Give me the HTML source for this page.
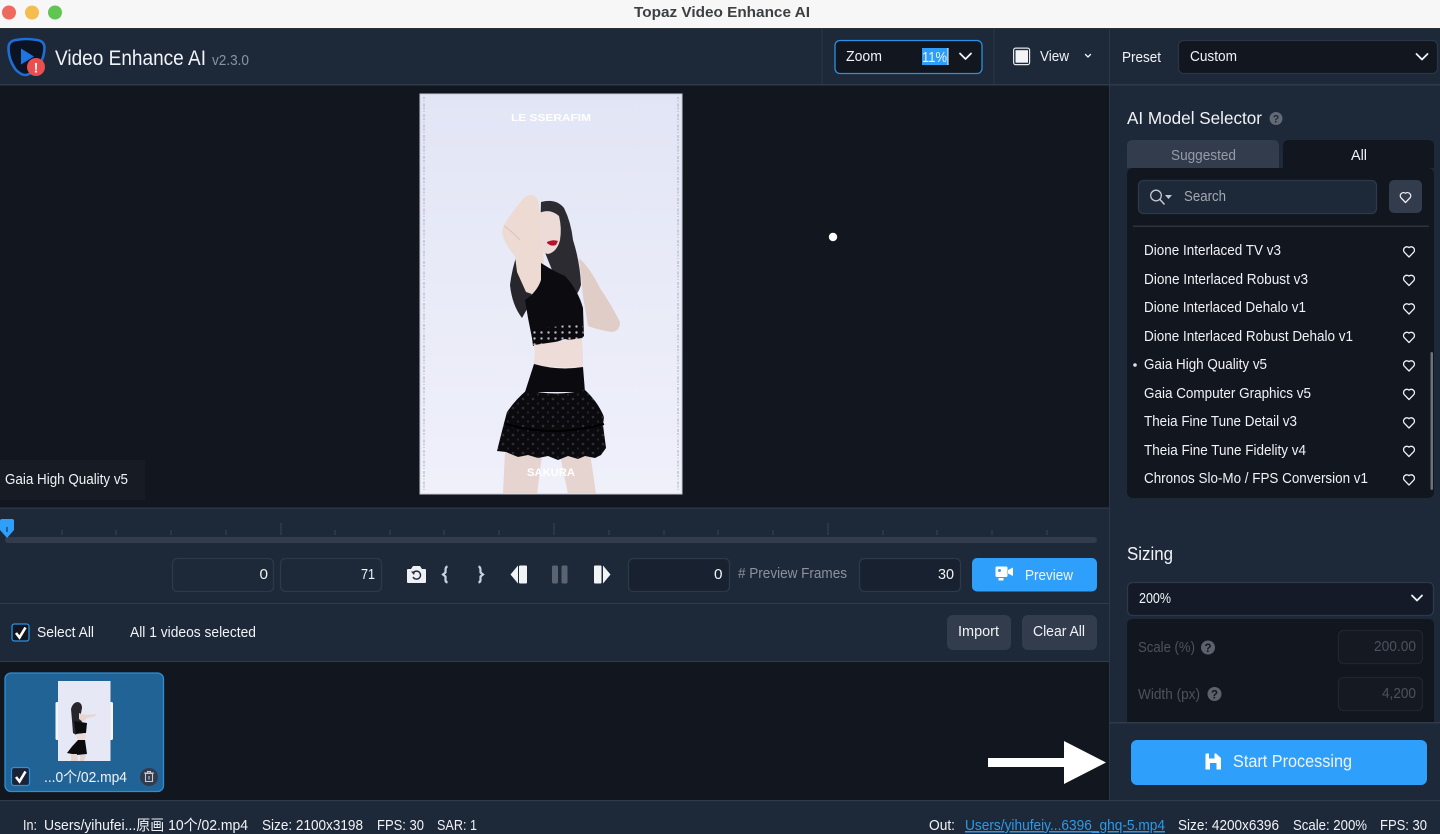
<!DOCTYPE html>
<html><head><meta charset="utf-8"><title>Topaz Video Enhance AI</title>
<style>
html,body{margin:0;padding:0;background:#12161f;width:1440px;height:834px;overflow:hidden}
svg{display:block}
text{font-family:"Liberation Sans","Noto Sans CJK SC",sans-serif;font-size:15px;fill:#f1f3f6}
.g{fill:#8d929b}.d{fill:#4c525d}
.tk{stroke:#3a4556;stroke-width:1}
.h{fill:none;stroke:#eef0f3;stroke-width:1.3;stroke-linejoin:round}
.ch{fill:none;stroke:#f1f3f6;stroke-width:1.8;stroke-linecap:round;stroke-linejoin:round}
</style></head><body>
<svg xmlns="http://www.w3.org/2000/svg" width="1440" height="834" viewBox="0 0 1440 834">
<defs>
<linearGradient id="bg" x1="0" y1="0" x2="0" y2="1"><stop offset="0" stop-color="#e2e5f5"/><stop offset=".5" stop-color="#e9ebf8"/><stop offset="1" stop-color="#eff0fa"/></linearGradient>
<pattern id="lace" width="10" height="9" patternUnits="userSpaceOnUse"><rect width="10" height="9" fill="#0b0b0f"/><circle cx="3" cy="3" r="1.300" fill="#2e2e36"/><circle cx="8" cy="7.500" r="1.100" fill="#26262e"/></pattern>
<pattern id="lace2" width="7" height="6" patternUnits="userSpaceOnUse"><rect width="7" height="6" fill="#0b0b0f"/><circle cx="2.500" cy="2.500" r="1.200" fill="#b9b6c2"/></pattern>
</defs>
<rect width="1440" height="834" fill="#12161f"/>
<!-- title bar -->
<rect width="1440" height="28" fill="#f6f7f6"/>
<rect y="28" width="1440" height="1" fill="#2b2f38"/>
<circle cx="9" cy="12.500" r="7" fill="#ee6a5f"/><circle cx="32" cy="12.500" r="7" fill="#f5bd4f"/><circle cx="55" cy="12.500" r="7" fill="#61c554"/>
<text x="634" y="17" textLength="176" lengthAdjust="spacingAndGlyphs" font-weight="bold" style="fill:#3d3f42;font-size:14.500px">Topaz Video Enhance AI</text>
<!-- toolbar -->
<rect y="29" width="1440" height="55" fill="#1d2839"/>
<rect y="84" width="1440" height="1.500" fill="#2f3a4b"/>
<path d="M822 29V84M994 29V84M1109.500 29V84" stroke="#2b3647" stroke-width="1"/>
<!-- logo -->
<path d="M8.500 48Q8.500 41 16 40Q26 38 37 40Q44.500 41 44.500 48Q44 62 34 70.500Q29 75 25.500 75Q21 75 16 70Q8.500 60 8.500 48Z" fill="#0c1323" stroke="#1b6fd6" stroke-width="2.600"/>
<path d="M21 48.500L34 56.500L21 64.500Z" fill="#1d74e2"/>
<circle cx="36" cy="67" r="9" fill="#ea4f50"/>
<text x="33.500" y="72.500" textLength="5" lengthAdjust="spacingAndGlyphs" font-weight="bold" style="font-size:14px">!</text>
<text x="55" y="65" textLength="151" lengthAdjust="spacingAndGlyphs" style="font-size:21px">Video Enhance AI</text>
<text x="212" y="65" textLength="37" lengthAdjust="spacingAndGlyphs" class="g">v2.3.0</text>
<!-- zoom -->
<rect x="835" y="40.500" width="147" height="33" rx="5" fill="#12161f" stroke="#2a90e2" stroke-width="1.300"/>
<text x="846" y="61" textLength="36" lengthAdjust="spacingAndGlyphs">Zoom</text>
<rect x="922" y="48" width="26" height="17" fill="#2d9ffb"/>
<rect x="947.500" y="48" width="1" height="17" fill="#fff"/>
<text x="922" y="62" textLength="25" lengthAdjust="spacingAndGlyphs" style="fill:#eaf4ff">11%</text>
<path class="ch" d="M960 53.500L965.500 59L971 53.500"/>
<!-- view -->
<rect x="1013.600" y="48.100" width="16" height="16.500" rx="2" fill="#1d2839" stroke="#e4e6ea" stroke-width="1.200"/>
<rect x="1015.500" y="50.200" width="12.500" height="12.500" fill="#f2f3f5"/>
<text x="1040" y="61" textLength="29" lengthAdjust="spacingAndGlyphs">View</text>
<path class="ch" style="stroke-width:1.300" d="M1085.500 54.500L1088 57L1090.500 54.500"/>
<!-- preset -->
<text x="1122" y="62" textLength="39" lengthAdjust="spacingAndGlyphs">Preset</text>
<rect x="1178.500" y="40.500" width="259" height="33" rx="5" fill="#12161f" stroke="#2a3546" stroke-width="1.300"/>
<text x="1190" y="61" textLength="47" lengthAdjust="spacingAndGlyphs">Custom</text>
<path class="ch" d="M1416.500 54L1422 59.500L1427.500 54"/>
<!-- right panel -->
<rect x="1110" y="85.500" width="330" height="716" fill="#1d2839"/>
<rect x="1109" y="85" width="1" height="716" fill="#2b3647"/>
<text x="1127" y="124" textLength="135" lengthAdjust="spacingAndGlyphs" style="font-size:17.500px">AI Model Selector</text>
<circle cx="1276" cy="118.500" r="6.500" fill="#646a75"/>
<text x="1272.700" y="122.500" textLength="6.500" lengthAdjust="spacingAndGlyphs" font-weight="bold" style="font-size:11px;fill:#1d2839">?</text>
<path d="M1127 168V146Q1127 140 1133 140H1273Q1279 140 1279 146V168Z" fill="#323c4d"/>
<path d="M1283 168V146Q1283 140 1289 140H1428Q1434 140 1434 146V168Z" fill="#12161f"/>
<text x="1171" y="160" textLength="65" lengthAdjust="spacingAndGlyphs" style="fill:#969ca6">Suggested</text>
<text x="1351" y="160" textLength="16" lengthAdjust="spacingAndGlyphs">All</text>
<rect x="1127" y="168" width="307" height="330" rx="6" fill="#12161f"/>
<rect x="1138.500" y="180.500" width="238" height="33" rx="5" fill="#1d2839" stroke="#2d3849" stroke-width="1.300"/>
<circle cx="1156" cy="195.500" r="5.300" fill="none" stroke="#c4c8cf" stroke-width="1.300"/>
<path d="M1160 199.500L1164.500 204.500" stroke="#c4c8cf" stroke-width="1.500"/>
<path d="M1165 195H1172L1168.500 199Z" fill="#c4c8cf"/>
<text x="1184" y="201" textLength="42" lengthAdjust="spacingAndGlyphs" style="fill:#a4a9b2">Search</text>
<rect x="1389" y="180" width="33" height="33" rx="5" fill="#323c4d"/>
<path class="h" d="M1405.500 202.500L1401 197.800A3.200 3.200 0 0 1 1405.500 193.300A3.200 3.200 0 0 1 1410 197.800Z"/>
<rect x="1133" y="225.500" width="296" height="1.500" fill="#2a3342"/>
<text x="1144" y="255" textLength="137" lengthAdjust="spacingAndGlyphs">Dione Interlaced TV v3</text>
<text x="1144" y="284" textLength="164" lengthAdjust="spacingAndGlyphs">Dione Interlaced Robust v3</text>
<text x="1144" y="312" textLength="162" lengthAdjust="spacingAndGlyphs">Dione Interlaced Dehalo v1</text>
<text x="1144" y="341" textLength="209" lengthAdjust="spacingAndGlyphs">Dione Interlaced Robust Dehalo v1</text>
<text x="1144" y="369" textLength="123" lengthAdjust="spacingAndGlyphs">Gaia High Quality v5</text>
<text x="1144" y="398" textLength="167" lengthAdjust="spacingAndGlyphs">Gaia Computer Graphics v5</text>
<text x="1144" y="426" textLength="153" lengthAdjust="spacingAndGlyphs">Theia Fine Tune Detail v3</text>
<text x="1144" y="455" textLength="162" lengthAdjust="spacingAndGlyphs">Theia Fine Tune Fidelity v4</text>
<text x="1144" y="483" textLength="224" lengthAdjust="spacingAndGlyphs">Chronos Slo-Mo / FPS Conversion v1</text>
<circle cx="1135" cy="365" r="1.800" fill="#cfe4f8"/>
<path class="h" d="M1409 257L1404.300 252.200A3.300 3.300 0 0 1 1409 247.600A3.300 3.300 0 0 1 1413.700 252.200Z"/>
<path class="h" d="M1409 285.500L1404.300 280.700A3.300 3.300 0 0 1 1409 276.100A3.300 3.300 0 0 1 1413.700 280.700Z"/>
<path class="h" d="M1409 314L1404.300 309.200A3.300 3.300 0 0 1 1409 304.600A3.300 3.300 0 0 1 1413.700 309.200Z"/>
<path class="h" d="M1409 342.500L1404.300 337.700A3.300 3.300 0 0 1 1409 333.100A3.300 3.300 0 0 1 1413.700 337.700Z"/>
<path class="h" d="M1409 371L1404.300 366.200A3.300 3.300 0 0 1 1409 361.600A3.300 3.300 0 0 1 1413.700 366.200Z"/>
<path class="h" d="M1409 399.500L1404.300 394.700A3.300 3.300 0 0 1 1409 390.100A3.300 3.300 0 0 1 1413.700 394.700Z"/>
<path class="h" d="M1409 428L1404.300 423.200A3.300 3.300 0 0 1 1409 418.600A3.300 3.300 0 0 1 1413.700 423.200Z"/>
<path class="h" d="M1409 456.500L1404.300 451.700A3.300 3.300 0 0 1 1409 447.100A3.300 3.300 0 0 1 1413.700 451.700Z"/>
<path class="h" d="M1409 485L1404.300 480.200A3.300 3.300 0 0 1 1409 475.600A3.300 3.300 0 0 1 1413.700 480.200Z"/>
<rect x="1430.500" y="352" width="2.500" height="138" rx="1.200" fill="#6c717a"/>
<!-- sizing -->
<text x="1127" y="560" textLength="46" lengthAdjust="spacingAndGlyphs" style="font-size:18px">Sizing</text>
<rect x="1127.500" y="582.500" width="306" height="33" rx="5" fill="#141a27" stroke="#2d3849" stroke-width="1.300"/>
<text x="1139" y="603" textLength="32" lengthAdjust="spacingAndGlyphs">200%</text>
<path class="ch" d="M1412 595.500L1417 600.500L1422 595.500"/>
<path d="M1127 723V625Q1127 619 1133 619H1428Q1434 619 1434 625V723Z" fill="#12161f"/>
<text x="1138" y="652" textLength="57" lengthAdjust="spacingAndGlyphs" class="d">Scale (%)</text>
<circle cx="1208" cy="647.500" r="7" fill="#5c616b"/>
<text x="1204.500" y="652" textLength="7" lengthAdjust="spacingAndGlyphs" font-weight="bold" style="font-size:12px;fill:#12161f">?</text>
<rect x="1338.500" y="630.500" width="84" height="33" rx="5" fill="#141922" stroke="#20262f" stroke-width="1.200"/>
<text x="1374" y="651" textLength="42" lengthAdjust="spacingAndGlyphs" class="d">200.00</text>
<text x="1138" y="699" textLength="62" lengthAdjust="spacingAndGlyphs" class="d">Width (px)</text>
<circle cx="1214.500" cy="694" r="7" fill="#5c616b"/>
<text x="1211" y="698.500" textLength="7" lengthAdjust="spacingAndGlyphs" font-weight="bold" style="font-size:12px;fill:#12161f">?</text>
<rect x="1338.500" y="677.500" width="84" height="33" rx="5" fill="#141922" stroke="#20262f" stroke-width="1.200"/>
<text x="1382" y="698" textLength="34" lengthAdjust="spacingAndGlyphs" class="d">4,200</text>
<rect x="1110" y="723" width="330" height="78" fill="#1d2839"/>
<rect x="1110" y="722" width="330" height="1.500" fill="#2f3a4b"/>
<rect x="1131" y="740" width="296" height="45" rx="6" fill="#2ea0fb"/>
<path d="M1205.500 754.500Q1205.500 753.500 1206.500 753.500H1209V758.500H1214.500V753.500H1216L1221 758V769.500H1216.500V763H1210V769.500H1205.500Z" fill="#fff"/>
<text x="1233" y="767" textLength="119" lengthAdjust="spacingAndGlyphs" style="font-size:17.500px">Start Processing</text>
<!-- arrow -->
<path d="M988 758H1064V741L1106 762.500L1064 784V767H988Z" fill="#fff"/>
<!-- preview picture -->
<rect x="419.500" y="93.500" width="263" height="401" fill="#c9ccd8"/>
<rect x="420.500" y="94.500" width="261" height="399" fill="url(#bg)"/>
<path d="M424 97V490M678 97V490" stroke="#9aa0ad" stroke-width="1.600" stroke-dasharray="2 1.500 1 2 3 1" opacity=".5"/>
<text x="511" y="121" textLength="80" lengthAdjust="spacingAndGlyphs" font-weight="bold" style="font-size:10.500px;fill:#fff">LE SSERAFIM</text>
<!-- figure: hair back -->
<path d="M541 202Q556 198 564 208Q571 222 573 240Q580 262 581 285Q576 300 572 292L552 270L540 240Z" fill="#2b2b31"/>
<path d="M519 248Q512 268 510 285Q512 305 522 318L532 300L528 258Z" fill="#26262c"/>
<!-- far arm -->
<path d="M579 258Q590 268 600 288Q612 306 620 322Q620 331 612 332Q598 330 588 326L583 296Z" fill="#e0cdc8"/>
<!-- face -->
<path d="M539 213Q550 208 559 216Q562 228 560 240Q557 252 548 254L540 252Z" fill="#ecdbd6"/>
<path d="M547 242Q553 239 558 241L556 245Q551 247 547 243Z" fill="#b5152a"/>
<!-- raised arm -->
<path d="M532 195Q539 197 539 207L541 235L544 262L538 296L526 292L517 272L515 256Q505 245 502 233Q503 224 510 216Q518 204 525 197Q528 195 532 195Z" fill="#ecdad3"/>
<path d="M504 226Q513 232 520 240" fill="none" stroke="#c9b5b0" stroke-width="1" opacity=".6"/>
<!-- top -->
<path d="M541 263Q555 272 565 276Q578 290 583 308L584 336L533 343L528 318L525 300Q537 292 541 280Z" fill="#0c0c10"/>
<path d="M531 329Q558 328 582 321L584 336L578 342L565 339L550 344L533 346Z" fill="url(#lace2)"/>
<!-- midriff -->
<path d="M534 345L582 338Q583 352 583 368L533 366Q536 355 534 345Z" fill="#eddcd7"/>
<!-- legs -->
<path d="M505 452L542 455L537 494H503Z" fill="#e6d4d1"/>
<path d="M560 455L590 452L596 494H568Z" fill="#e6d4d1"/>
<!-- skirt -->
<path d="M534 364Q558 371 583 367L585 392L525 392Z" fill="#0b0b0f"/>
<path d="M527 390Q556 397 585 390Q598 402 604 417L603 425L606 448L601 455L595 458L585 456L578 459L568 456L558 460L548 456L538 458L528 455L518 457L506 452L497 451L503 427L507 412Q516 399 527 390Z" fill="url(#lace)"/>
<path d="M506 424Q552 438 604 424" fill="none" stroke="#000" stroke-width="2"/>
<text x="527" y="476" textLength="48" lengthAdjust="spacingAndGlyphs" font-weight="bold" style="font-size:11px;fill:#fff">SAKURA</text>
<!-- caption, dot -->
<rect x="0" y="460" width="145" height="40" fill="#161b24"/>
<text x="5" y="484" textLength="123" lengthAdjust="spacingAndGlyphs">Gaia High Quality v5</text>
<circle cx="833" cy="237" r="4.200" fill="#fff"/>
<!-- timeline panel -->
<rect y="508" width="1109" height="153" fill="#1d2839"/>
<rect y="507.500" width="1109" height="1.200" fill="#2f3a4b"/>
<rect y="603" width="1109" height="1" fill="#2f3a4b"/>
<rect y="661" width="1109" height="1" fill="#2f3a4b"/>
<path class="tk" d="M62 530V535M116 530V535M171 530V535M226 530V535M281 523V535M335 530V535M390 530V535M444 530V535M499 530V535M554 523V535M609 530V535M664 530V535M718 530V535M773 530V535M828 523V535M883 530V535M937 530V535M992 530V535M1047 530V535"/>
<rect x="5" y="537" width="1092" height="6" rx="3" fill="#323c4d"/>
<path d="M0 521Q0 519 2 519H12Q14 519 14 521V530L7 538L0 530Z" fill="#2ea0fb"/>
<rect x="6.500" y="527" width="1" height="5" fill="#123"/>
<rect x="172.500" y="558.500" width="101" height="33" rx="5" fill="#1d2839" stroke="#2d3849" stroke-width="1.300"/>
<text x="259.500" y="579" textLength="8.500" lengthAdjust="spacingAndGlyphs">0</text>
<rect x="280.500" y="558.500" width="101" height="33" rx="5" fill="#1d2839" stroke="#2d3849" stroke-width="1.300"/>
<text x="361" y="579" textLength="14" lengthAdjust="spacingAndGlyphs">71</text>
<!-- camera -->
<path d="M407 570Q407 569 408 569H411L413 566H420L422 569H425Q426 569 426 570V582Q426 583 425 583H408Q407 583 407 582Z" fill="#eef0f3"/>
<path d="M413.500 572.500A4 4 0 1 1 413 577" fill="none" stroke="#1d2839" stroke-width="1.400"/>
<path d="M411 571.500L415 571.500L414 575Z" fill="#1d2839"/>
<!-- braces -->
<path d="M447.500 566.500Q445.500 567 445.500 570V572.500L443 574.500L445.500 576.500V580Q445.500 582 447.500 582.500" fill="none" stroke="#c9d2de" stroke-width="2.200"/>
<path d="M478.500 566.500Q480.500 567 480.500 570V572.500L483 574.500L480.500 576.500V580Q480.500 582 478.500 582.500" fill="none" stroke="#c9d2de" stroke-width="2.200"/>
<!-- transport -->
<path d="M510.500 574.500L518 565.500V583.500Z" fill="#f2f3f5"/><rect x="519" y="565.500" width="8" height="18" rx="1" fill="#f2f3f5"/>
<rect x="552" y="565.500" width="6" height="18" rx="1.500" fill="#5b6370"/><rect x="561.500" y="565.500" width="6" height="18" rx="1.500" fill="#5b6370"/>
<rect x="594" y="565.500" width="7.500" height="18" rx="1" fill="#f2f3f5"/><path d="M603 565.500L610.500 574.500L603 583.500Z" fill="#f2f3f5"/>
<rect x="628.500" y="558.500" width="101" height="33" rx="5" fill="#182130" stroke="#2d3849" stroke-width="1.300"/>
<text x="714" y="579" textLength="8.500" lengthAdjust="spacingAndGlyphs">0</text>
<text x="738" y="578" textLength="109" lengthAdjust="spacingAndGlyphs" class="g"># Preview Frames</text>
<rect x="859.500" y="558.500" width="101" height="33" rx="5" fill="#182130" stroke="#2d3849" stroke-width="1.300"/>
<text x="938" y="579" textLength="16" lengthAdjust="spacingAndGlyphs">30</text>
<rect x="972" y="558" width="125" height="33.500" rx="5" fill="#2ea0fb"/>
<rect x="995.500" y="566.500" width="12" height="10.500" rx="1.500" fill="#fff"/><path d="M1008 570L1013 567.500V576L1008 573.500Z" fill="#fff"/>
<circle cx="999.500" cy="570.500" r="1.500" fill="#2ea0fb"/><rect x="998.500" y="578" width="5" height="2.500" fill="#fff"/>
<text x="1025" y="580" textLength="48" lengthAdjust="spacingAndGlyphs">Preview</text>
<!-- select row -->
<rect x="12" y="624" width="17" height="17" rx="2.500" fill="#12161f" stroke="#2a90e2" stroke-width="1.300"/>
<path d="M16 633L19.500 637.500L25.500 627.500" fill="none" stroke="#fff" stroke-width="2.600"/>
<text x="37" y="637" textLength="57" lengthAdjust="spacingAndGlyphs">Select All</text>
<text x="130" y="637" textLength="126" lengthAdjust="spacingAndGlyphs">All 1 videos selected</text>
<rect x="947" y="615" width="64" height="35" rx="6" fill="#323c4d"/>
<text x="958" y="636" textLength="41" lengthAdjust="spacingAndGlyphs">Import</text>
<rect x="1022" y="615" width="75" height="35" rx="6" fill="#323c4d"/>
<text x="1033" y="636" textLength="52" lengthAdjust="spacingAndGlyphs">Clear All</text>
<!-- card -->
<rect x="5" y="673" width="158.500" height="118.500" rx="6" fill="#206394" stroke="#2a8fd8" stroke-width="1.300"/>
<rect x="55.500" y="702" width="4" height="38" rx="1.500" fill="#f4f6fb"/><rect x="109" y="702" width="4" height="38" rx="1.500" fill="#f4f6fb"/>
<rect x="58" y="681" width="52.500" height="80" fill="#e6e8f6"/>
<path d="M71 709Q73 702 78 702Q82 703 82 708L80 718L82 721L78 736L73 733Q72 720 71 709Z" fill="#26262c"/>
<path d="M79 713Q84 716 96 714L95 716.500L87 718L83 722L79 719Z" fill="#e7d5cf"/>
<path d="M74 721L87 723L86 733L76 734Z" fill="#0d0d11"/>
<path d="M76 734L86 733L85 741H78Z" fill="#ecdbd6"/>
<path d="M78 740H85L87 754L77 755L67 753Q72 746 78 740Z" fill="#0b0b0f"/>
<path d="M71 754H77L78 761H71ZM80 755H86L84 761H80Z" fill="#e4d2cf"/>
<rect x="11.500" y="767.500" width="18" height="18" rx="2.500" fill="#1a2235" stroke="#2a90e2" stroke-width="1.300"/>
<path d="M16 777L19.500 781.500L25.500 771.500" fill="none" stroke="#fff" stroke-width="2.600"/>
<text x="44" y="782" textLength="83" lengthAdjust="spacingAndGlyphs">...0个/02.mp4</text>
<circle cx="149" cy="777" r="9" fill="#323c4d"/>
<path d="M145.500 773.500H152.500V781.500H145.500ZM144 773H154M147.500 773V771.500H150.500V773M149 776V779.500" fill="none" stroke="#c8ccd2" stroke-width="1.100"/>
<!-- status -->
<rect y="800" width="1440" height="34" fill="#1d2839"/>
<rect y="800" width="1440" height="1.200" fill="#2f3a4b"/>
<text x="23" y="830" textLength="14" lengthAdjust="spacingAndGlyphs">In:</text>
<text x="44" y="830" textLength="204" lengthAdjust="spacingAndGlyphs">Users/yihufei...原画 10个/02.mp4</text>
<text x="262" y="830" textLength="101" lengthAdjust="spacingAndGlyphs">Size: 2100x3198</text>
<text x="377" y="830" textLength="47" lengthAdjust="spacingAndGlyphs">FPS: 30</text>
<text x="437" y="830" textLength="40" lengthAdjust="spacingAndGlyphs">SAR: 1</text>
<text x="929" y="830" textLength="26" lengthAdjust="spacingAndGlyphs">Out:</text>
<text x="965" y="830" textLength="200" lengthAdjust="spacingAndGlyphs" text-decoration="underline" style="fill:#2d9ae8">Users/yihufeiy...6396_ghq-5.mp4</text>
<text x="1178" y="830" textLength="101" lengthAdjust="spacingAndGlyphs">Size: 4200x6396</text>
<text x="1293" y="830" textLength="74" lengthAdjust="spacingAndGlyphs">Scale: 200%</text>
<text x="1380" y="830" textLength="47" lengthAdjust="spacingAndGlyphs">FPS: 30</text>
</svg>
</body></html>
